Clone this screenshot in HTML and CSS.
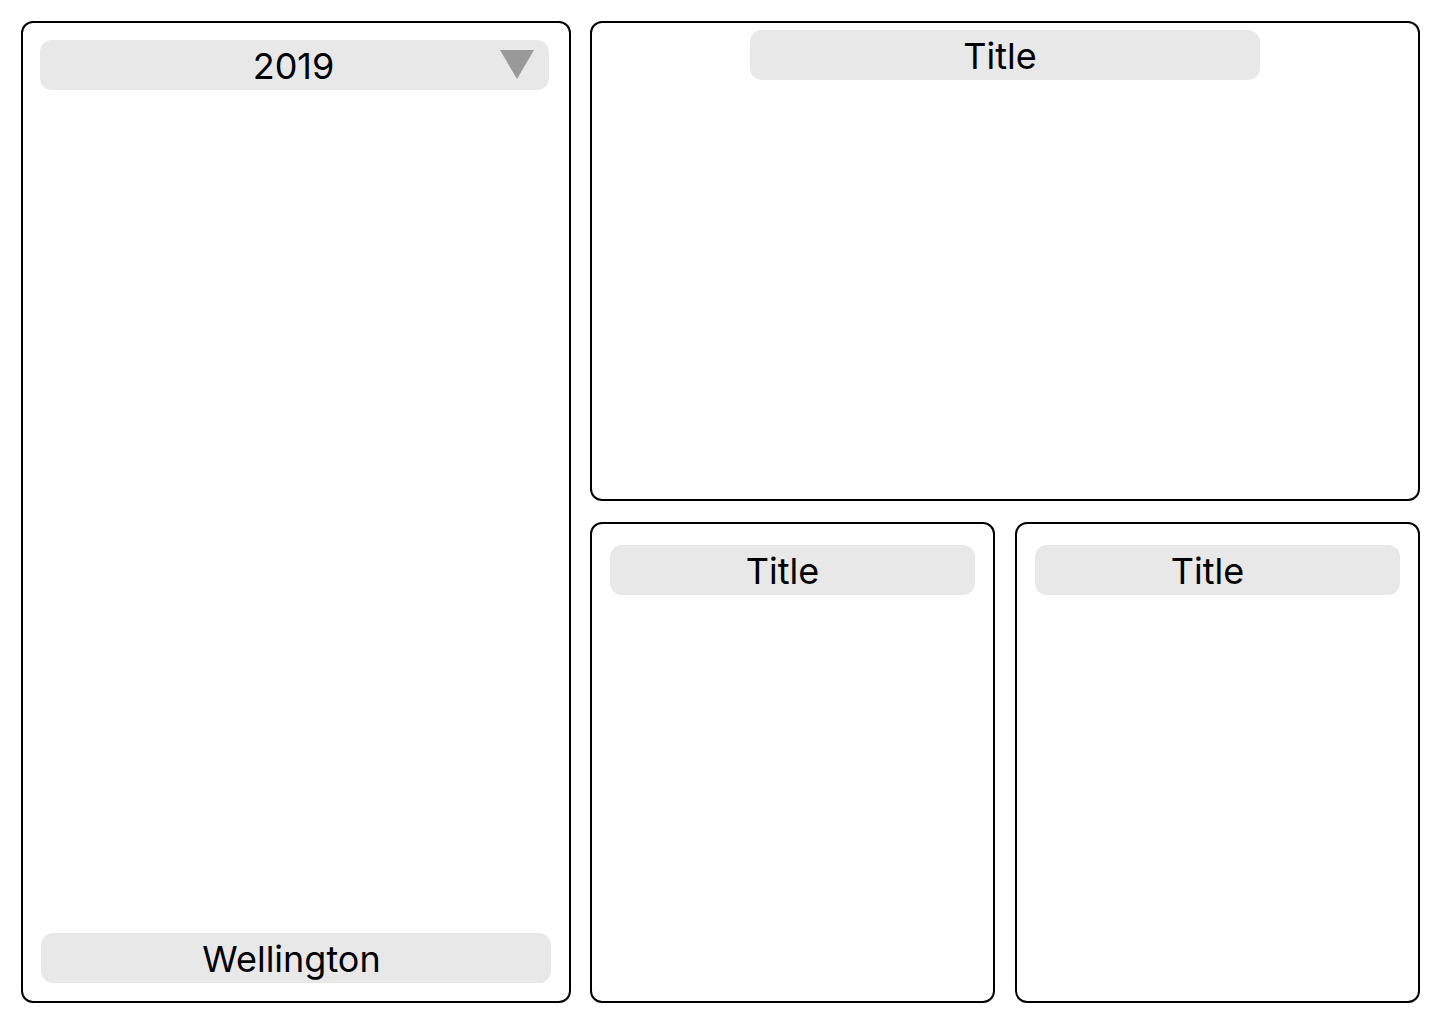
FILE: index.html
```html
<!DOCTYPE html>
<html lang="en">
<head>
<meta charset="utf-8">
<title>Dashboard wireframe</title>
<link rel="stylesheet" href="styles.css">
</head>
<body>
<div class="page">
  <section class="panel panel-left">
    <div class="pill dropdown">
      <span>2019</span>
      <svg class="caret" width="34" height="29" viewBox="0 0 34 29" aria-hidden="true"><polygon points="0,0 34,0 17,29" fill="#999999"/></svg>
    </div>
    <div class="pill place">Wellington</div>
  </section>
  <div class="right-col">
    <section class="panel panel-top">
      <div class="pill title-top">Title</div>
    </section>
    <div class="bottom-row">
      <section class="panel panel-small">
        <div class="pill title-small">Title</div>
      </section>
      <section class="panel panel-small">
        <div class="pill title-small">Title</div>
      </section>
    </div>
  </div>
</div>
</body>
</html>
```

FILE: styles.css
```css
html, body {
  margin: 0;
  padding: 0;
  background: #ffffff;
}

body {
  font-family: Inter, "Noto Sans", sans-serif;
  color: #000000;
}

.page {
  box-sizing: border-box;
  width: 1440px;
  height: 1024px;
  padding: 21px 20px 21px 21px;
  display: flex;
  gap: 19px;
}

.panel {
  box-sizing: border-box;
  border: 2px solid #000000;
  border-radius: 12px;
  background: #ffffff;
  display: flex;
  flex-direction: column;
}

.panel-left {
  width: 550px;
  height: 982px;
  padding: 17px 18px 18px 18px;
  justify-content: space-between;
}

.right-col {
  width: 830px;
  display: flex;
  flex-direction: column;
  gap: 21px;
}

.panel-top {
  height: 480px;
  padding-top: 7px;
  align-items: center;
}

.bottom-row {
  height: 481px;
  display: flex;
  gap: 20px;
}

.panel-small {
  width: 405px;
  padding: 21px 18px 0 18px;
}

.pill {
  box-sizing: border-box;
  height: 50px;
  padding-top: 3px;
  line-height: 47px;
  border-radius: 12px;
  background: #e8e8e8;
  text-align: center;
  font-size: 36px;
  font-weight: 400;
  letter-spacing: 0;
  white-space: nowrap;
}

.title-top {
  width: 510px;
  padding-right: 10px;
}

.title-small {
  padding-right: 20px;
}

.place {
  padding-right: 9px;
}

.dropdown {
  position: relative;
  margin: 0 2px 0 -1px;
  padding-right: 2px;
}

.caret {
  position: absolute;
  right: 15px;
  top: 10px;
}
```
